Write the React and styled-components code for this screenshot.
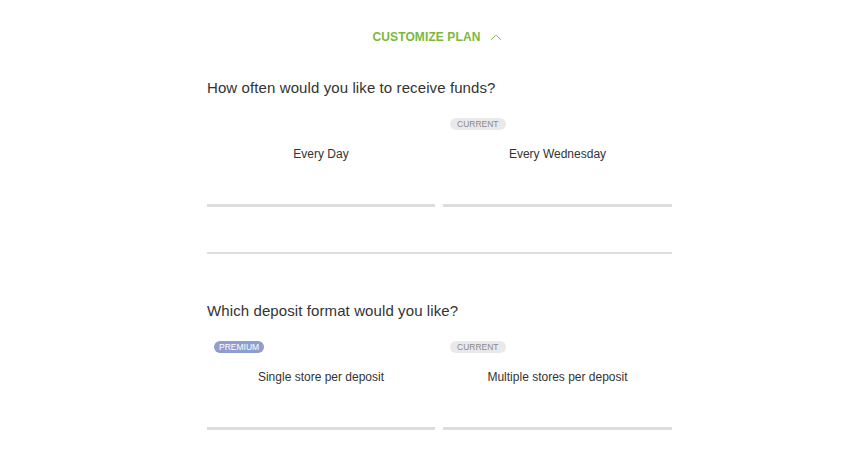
import React from 'react';
import styled, { createGlobalStyle } from 'styled-components';

const GlobalStyle = createGlobalStyle`
  html, body {
    margin: 0;
    padding: 0;
    background: #fff;
    font-family: "Liberation Sans", Arial, Helvetica, sans-serif;
    color: #333;
  }
`;

const Page = styled.div`
  padding: 28px 0 0 23px;
`;

const Panel = styled.div`
  width: 465px;
  margin: 0 auto;
`;

const ToggleBar = styled.button`
  display: flex;
  align-items: center;
  justify-content: center;
  gap: 10px;
  width: 100%;
  height: 18px;
  padding: 0 4px 0 0;
  border: 0;
  background: none;
  color: #7cb83c;
  font-family: inherit;
  font-size: 12px;
  font-weight: 700;
  letter-spacing: 0.1px;
  cursor: pointer;
`;

const Question = styled.h3`
  margin: ${({ $top }) => $top}px 0 18px;
  font-size: 15px;
  line-height: 20px;
  font-weight: 400;
  letter-spacing: 0.1px;
  color: #333;
`;

const Options = styled.div`
  display: grid;
  grid-template-columns: 228px 229px;
  gap: 8px;
`;

const Option = styled.div`
  position: relative;
  height: 91px;
  box-sizing: border-box;
  padding-top: 29px;
  border-bottom: 3px solid #dddddd;
  text-align: center;
  font-size: 12px;
  line-height: 18px;
  color: #333;
`;

const Badge = styled.span`
  position: absolute;
  top: 2px;
  left: 7px;
  height: 12px;
  padding: 0 ${({ $premium }) => ($premium ? 5 : 7)}px;
  border-radius: 6px;
  background: ${({ $premium }) => ($premium ? '#8f9ecf' : '#e9e9e9')};
  color: ${({ $premium }) => ($premium ? '#fff' : '#8a8a8a')};
  font-size: 8.5px;
  line-height: 12px;
  text-transform: uppercase;
`;

const Divider = styled.hr`
  margin: 45px 0 0;
  border: 0;
  height: 2px;
  background: #dddddd;
`;

const Chevron = () => (
  <svg width="12" height="8" viewBox="0 0 12 8" fill="none">
    <path d="M1 7L6 2l5 5" stroke="#8cc152" strokeWidth="1" />
  </svg>
);

const sections = [
  {
    question: 'How often would you like to receive funds?',
    options: [
      { label: 'Every Day' },
      { label: 'Every Wednesday', badge: 'Current' },
    ],
  },
  {
    question: 'Which deposit format would you like?',
    options: [
      { label: 'Single store per deposit', badge: 'Premium', premium: true },
      { label: 'Multiple stores per deposit', badge: 'Current' },
    ],
  },
];

const App = () => (
  <Page>
    <GlobalStyle />
    <Panel>
      <ToggleBar>
        CUSTOMIZE PLAN
        <Chevron />
      </ToggleBar>

      <Question $top={32}>{sections[0].question}</Question>
      <Options>
        {sections[0].options.map((o) => (
          <Option key={o.label}>
            {o.badge && <Badge $premium={o.premium}>{o.badge}</Badge>}
            {o.label}
          </Option>
        ))}
      </Options>

      <Divider />

      <Question $top={47}>{sections[1].question}</Question>
      <Options>
        {sections[1].options.map((o) => (
          <Option key={o.label}>
            {o.badge && <Badge $premium={o.premium}>{o.badge}</Badge>}
            {o.label}
          </Option>
        ))}
      </Options>
    </Panel>
  </Page>
);

export default App;
